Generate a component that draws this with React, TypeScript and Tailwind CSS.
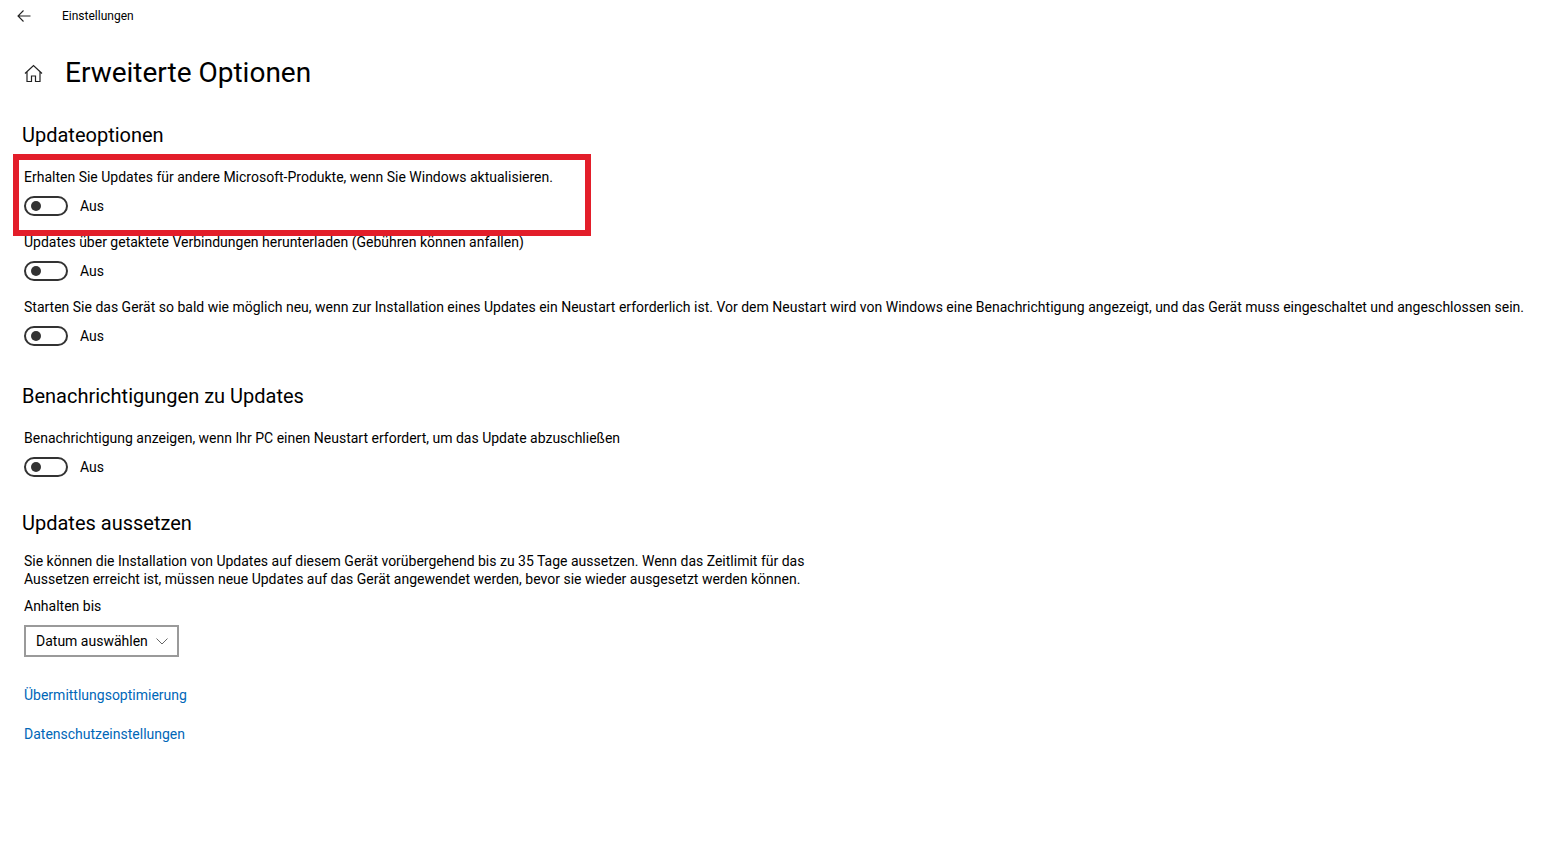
import React from 'react';

const font = { fontFamily: 'Roboto, "Noto Sans", sans-serif' };

const Toggle = () => (
  <div className="mt-[9px] flex h-5 items-center">
    <div className="flex h-5 w-11 items-center rounded-full border-2 border-[#333] pl-[5px]">
      <div className="h-[10px] w-[10px] rounded-full bg-[#333]"></div>
    </div>
    <span className="ml-3 text-[14px] leading-5 text-black">Aus</span>
  </div>
);

const Setting = ({ label, first }: { label: string; first?: boolean }) => (
  <div className={first ? 'mt-[18px]' : 'mt-4'}>
    <p className="whitespace-nowrap text-[14px] leading-5 text-black">{label}</p>
    <Toggle />
  </div>
);

const App = () => {
  return (
    <div className="relative min-h-[841px] w-full bg-white" style={font}>
      {/* titelleiste */}
      <div className="flex h-8 items-center">
        <div className="flex w-[62px] items-center pl-[17px]">
          <svg width="14" height="12" viewBox="0 0 14 12" fill="none" stroke="#222" strokeWidth="1.1">
            <path d="M13.5 6H1M6.5 0.5L1 6l5.5 5.5" />
          </svg>
        </div>
        <span className="text-[12px] text-black">Einstellungen</span>
      </div>

      <div className="pl-6">
        {/* seitentitel */}
        <div className="mt-[21px] flex h-10 items-center">
          <svg width="19" height="19" viewBox="0 0 19 19" fill="none" stroke="#222" strokeWidth="1.2">
            <path d="M1 9.5L9.5 1.5l8.5 8M3 7.5V17.5h4.5v-5.5h4v5.5h4.5V7.5" />
          </svg>
          <h1 className="ml-[22px] text-[28px] font-normal leading-10 text-black">Erweiterte Optionen</h1>
        </div>

        <h2 className="-ml-[2px] mt-7 text-[20px] leading-7 text-black">Updateoptionen</h2>
        <Setting first label="Erhalten Sie Updates für andere Microsoft-Produkte, wenn Sie Windows aktualisieren." />
        <Setting label="Updates über getaktete Verbindungen herunterladen (Gebühren können anfallen)" />
        <Setting label="Starten Sie das Gerät so bald wie möglich neu, wenn zur Installation eines Updates ein Neustart erforderlich ist. Vor dem Neustart wird von Windows eine Benachrichtigung angezeigt, und das Gerät muss eingeschaltet und angeschlossen sein." />

        <h2 className="-ml-[2px] mt-9 text-[20px] leading-7 text-black">Benachrichtigungen zu Updates</h2>
        <Setting first label="Benachrichtigung anzeigen, wenn Ihr PC einen Neustart erfordert, um das Update abzuschließen" />

        <h2 className="-ml-[2px] mt-8 text-[20px] leading-7 text-black">Updates aussetzen</h2>
        <p className="mt-[15px] whitespace-nowrap text-[14px] leading-[18px] text-black">
          Sie können die Installation von Updates auf diesem Gerät vorübergehend bis zu 35 Tage aussetzen. Wenn das Zeitlimit für das
          <br />
          Aussetzen erreicht ist, müssen neue Updates auf das Gerät angewendet werden, bevor sie wieder ausgesetzt werden können.
        </p>
        <p className="mt-2 text-[14px] leading-5 text-black">Anhalten bis</p>
        <div className="mt-[9px] flex h-8 w-[155px] items-center justify-between border-2 border-[#9a9a9a] pl-[10px] pr-[9px]">
          <span className="whitespace-nowrap text-[14px] text-black">Datum auswählen</span>
          <svg width="12" height="7" viewBox="0 0 12 7" fill="none" stroke="#666" strokeWidth="1">
            <path d="M0.5 0.5L6 6l5.5-5.5" />
          </svg>
        </div>

        <p className="mt-7 text-[14px] leading-5 text-[#0067b8]">Übermittlungsoptimierung</p>
        <p className="mt-[19px] text-[14px] leading-5 text-[#0067b8]">Datenschutzeinstellungen</p>
      </div>

      {/* rote markierung */}
      <div className="pointer-events-none absolute left-[13px] top-[154px] h-[82px] w-[578px] border-[6px] border-[#e31e2a]"></div>
    </div>
  );
};

export default App;
